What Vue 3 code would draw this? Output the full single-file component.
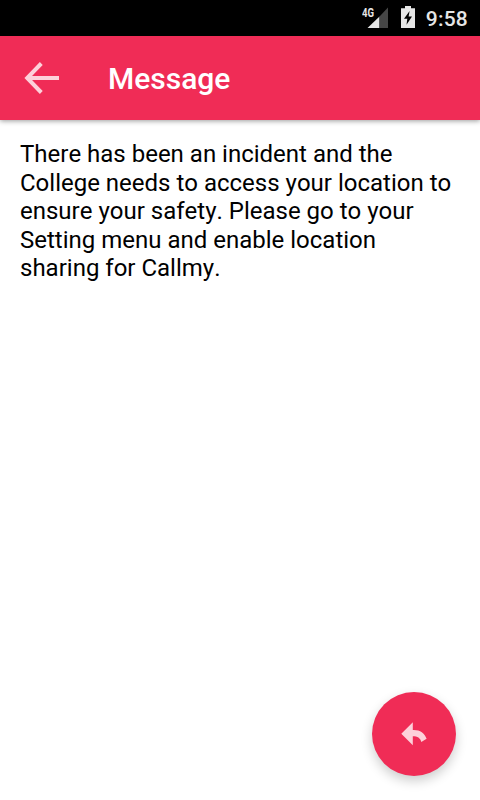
<template>
  <div class="screen">
    <div class="status-bar">
      <svg class="signal" width="28" height="24" viewBox="0 0 28 24">
        <path d="M17.500 10.500V22H5.500z" fill="#e6e6e6" />
        <path d="M17.500 10.500L26 1.500V22h-8.500z" fill="#464646" />
        <text class="network" x="0" y="11" textLength="12" lengthAdjust="spacingAndGlyphs">4G</text>
      </svg>
      <svg class="battery" width="14" height="22" viewBox="0 0 14 22">
        <path d="M4 0h6v2.200h4V22H0V2.200h4z" fill="#e6e6e6" />
        <path d="M8.600 5L3 12.700h3.300l-.8 6L11 10.500H7.600z" fill="#000" />
      </svg>
      <span class="time">{{ time }}</span>
    </div>

    <header class="toolbar">
      <button class="btn-back" aria-label="Back">
        <svg width="36" height="34" viewBox="0 0 36 34">
          <path d="M17.300 2.500L3.200 17l14.100 14.500M3 17h32" fill="none" stroke="#fdd1da" stroke-width="4" />
        </svg>
      </button>
      <h1>{{ title }}</h1>
    </header>

    <main class="content">
      <p>{{ message }}</p>
    </main>

    <button class="fab" aria-label="Reply">
      <svg width="28" height="26" viewBox="0 0 28 26">
        <path
          d="M1.300 12.800L12.800 1.300v7.800c7.200-.3 11.500 2.800 13.800 8.600l-5.300 3.200c-1.100-4-3.700-5.700-8.500-5.700v9z"
          fill="#fdd1da"
        />
      </svg>
    </button>
  </div>
</template>

<script setup>
import { ref } from "vue";

const time = ref("9:58");
const title = ref("Message");
const message = ref(
  "There has been an incident and the College needs to access your location to ensure your safety. Please go to your Setting menu and enable location sharing for Callmy."
);
</script>

<style>
body {
  margin: 0;
  background: #fff;
}
</style>

<style scoped>
.screen {
  height: 100vh;
  display: flex;
  flex-direction: column;
  background: #fff;
  font-family: Roboto, sans-serif;
  font-kerning: none;
  overflow: hidden;
}

/* Status bar */
.status-bar {
  flex: none;
  height: 36px;
  box-sizing: border-box;
  padding-right: 12px;
  display: flex;
  align-items: flex-start;
  justify-content: flex-end;
  background: #000;
}

.signal {
  margin: 6px 11px 0 0;
}

.network {
  font-size: 12.5px;
  font-weight: 700;
  fill: #e6e6e6;
}

.battery {
  margin: 6px 11px 0 0;
}

.time {
  color: #e6e6e6;
  font-size: 21px;
  font-weight: 500;
  line-height: 38px;
  letter-spacing: 0.2px;
}

/* Toolbar */
.toolbar {
  flex: none;
  height: 84px;
  display: flex;
  align-items: center;
  background: #f02c56;
  box-shadow: 0 1px 5px rgba(0, 0, 0, 0.4);
}

.btn-back {
  width: 84px;
  height: 84px;
  padding: 0;
  border: none;
  background: transparent;
  display: flex;
  align-items: center;
  justify-content: center;
}

.toolbar h1 {
  margin: 0 0 0 24px;
  color: #fff;
  font-size: 30px;
  font-weight: 500;
}

/* Message text */
.content {
  padding: 20px 24px 0 20px;
}

.content p {
  margin: 0;
  color: #000;
  font-size: 24px;
  line-height: 28.5px;
}

/* Floating reply button */
.fab {
  position: absolute;
  right: 24px;
  bottom: 24px;
  width: 84px;
  height: 84px;
  padding: 0;
  border: none;
  border-radius: 50%;
  background: #f02c56;
  box-shadow: 0 5px 12px rgba(0, 0, 0, 0.2);
  display: flex;
  align-items: center;
  justify-content: center;
}
</style>
